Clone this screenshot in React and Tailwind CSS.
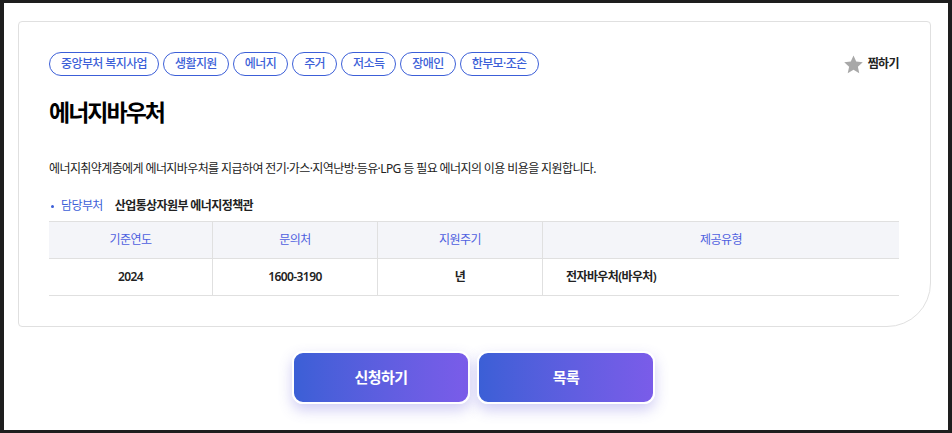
import React from "react";

const tags = ["중앙부처 복지사업", "생활지원", "에너지", "주거", "저소득", "장애인", "한부모·조손"];

export default function App() {
  return (
    <div className="w-[952px] h-[433px] bg-[#1e1e1e] pt-[3px] pl-[4px] pr-[4px] pb-[3px] tracking-[-0.6px]" style={{ fontFamily: '"Noto Sans", "Noto Sans CJK KR", sans-serif' }}>
      <div className="w-[944px] h-[427px] bg-white pt-[18px] pl-[14px] pr-[17px] flex flex-col">
        <div className="w-[913px] h-[306px] border border-[#e0e0e0] rounded-t-[4px] rounded-bl-[4px] rounded-br-[44px] pl-[30px] pr-[30px] pt-[30px]">
          <div className="flex items-center justify-between">
            <div className="flex gap-[4px]">
              {tags.map((t) => (
                <span key={t} className="h-[24px] px-[11px] flex items-center rounded-full border border-[#3c5fd8] text-[#3c5fd8] text-[12px] font-medium leading-none">
                  {t}
                </span>
              ))}
            </div>
            <div className="flex items-center gap-[4px] mr-[1px]">
              <svg width="21" height="21" viewBox="0 0 24 24"><path d="M12 1.8l3.1 6.9 7.5.8-5.6 5 1.6 7.4L12 18.1l-6.6 3.8 1.6-7.4-5.6-5 7.5-.8z" fill="#a8a8a8" /></svg>
              <span className="text-[12px] font-bold text-[#222]">찜하기</span>
            </div>
          </div>
          <h1 className="mt-[20px] text-[23px] font-bold leading-[32px] text-black tracking-[-2px]">에너지바우처</h1>
          <p className="mt-[32px] text-[12px] leading-[18px] text-[#222]">
            에너지취약계층에게 에너지바우처를 지급하여 전기·가스·지역난방·등유·LPG 등 필요 에너지의 이용 비용을 지원합니다.
          </p>
          <div className="mt-[19px] flex items-center text-[12px] leading-[18px]">
            <span className="w-[3px] h-[3px] rounded-full bg-[#3c5fd8] ml-[2px]"></span>
            <span className="ml-[7px] text-[#3c5fd8]">담당부처</span>
            <span className="ml-[12px] font-bold text-[#222]">산업통상자원부 에너지정책관</span>
          </div>
          <div className="mt-[6px] w-[850px] border-t border-[#e0e0e0] text-[12px]">
            <div className="grid grid-cols-[164px_165px_165px_356px] h-[37px] bg-[#f4f5f9] border-b border-[#e0e0e0] text-[#4e5fe0]">
              <div className="flex items-center justify-center border-r border-[#e0e0e0]">기준연도</div>
              <div className="flex items-center justify-center border-r border-[#e0e0e0]">문의처</div>
              <div className="flex items-center justify-center border-r border-[#e0e0e0]">지원주기</div>
              <div className="flex items-center justify-center">제공유형</div>
            </div>
            <div className="grid grid-cols-[164px_165px_165px_356px] h-[37px] border-b border-[#e0e0e0] text-[#222] font-semibold">
              <div className="flex items-center justify-center border-r border-[#e0e0e0]">2024</div>
              <div className="flex items-center justify-center border-r border-[#e0e0e0]">1600-3190</div>
              <div className="flex items-center justify-center border-r border-[#e0e0e0]">년</div>
              <div className="flex items-center pl-[23px]">전자바우처(바우처)</div>
            </div>
          </div>
        </div>
        <div className="mt-[24px] flex justify-center gap-[7px] pr-[2px]">
          <button className="w-[178px] h-[53px] rounded-[11px] border-2 border-white bg-gradient-to-r from-[#3b5fd6] to-[#7a5ce9] text-white text-[15px] font-bold shadow-[0_6px_14px_rgba(100,90,220,0.3)]">신청하기</button>
          <button className="w-[178px] h-[53px] rounded-[11px] border-2 border-white bg-gradient-to-r from-[#3b5fd6] to-[#7a5ce9] text-white text-[15px] font-bold shadow-[0_6px_14px_rgba(100,90,220,0.3)]">목록</button>
        </div>
      </div>
    </div>
  );
}
